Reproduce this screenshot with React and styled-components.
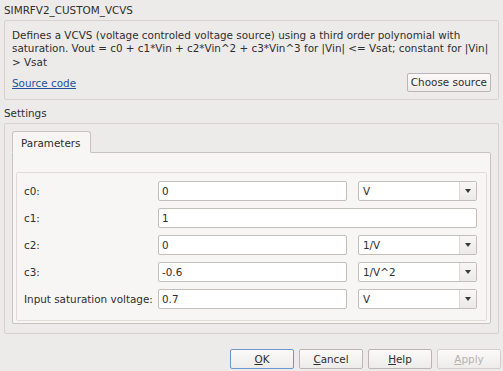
import React from "react";
import styled, { createGlobalStyle } from "styled-components";

const GlobalStyle = createGlobalStyle`
  html, body {
    margin: 0;
    padding: 0;
    background: #edebe9;
  }
  body {
    font-family: "DejaVu Sans", "Liberation Sans", sans-serif;
    font-size: 10.4px;
    color: #2e2e2e;
  }
`;

const Dialog = styled.div`
  width: 503px;
  height: 371px;
  display: flex;
  flex-direction: column;
  box-sizing: border-box;
  overflow: hidden;
`;

const Heading = styled.div`
  height: 20px;
  padding: 4px 0 0 4px;
  box-sizing: border-box;
  line-height: 13px;
`;

const DescBox = styled.div`
  margin: 0 4px;
  height: 80px;
  box-sizing: border-box;
  border: 1px solid #d6d3cf;
  border-radius: 2px;
  padding: 8px 7px 7px 7px;
  display: flex;
  flex-direction: column;
`;

const DescText = styled.div`
  line-height: 13.3px;
  height: 40px;
`;

const LinkRow = styled.div`
  display: flex;
  align-items: center;
  justify-content: space-between;
  margin-top: 4px;
`;

const SourceLink = styled.a`
  color: #22509f;
  text-decoration: underline;
  cursor: pointer;
`;

const PushButton = styled.button`
  font-family: inherit;
  font-size: inherit;
  color: ${(p) => (p.disabled ? "#b4b1ad" : "#2e2e2e")};
  background: linear-gradient(#fbfaf9, #eeecea);
  border: 1px solid ${(p) => (p.$default ? "#6b98cf" : p.disabled ? "#d3d0cc" : "#bab6b1")};
  border-radius: 2px;
  height: ${(p) => p.$h || 20}px;
  width: ${(p) => (p.$w ? p.$w + "px" : "auto")};
  padding: 0 3px;
  box-sizing: border-box;
  line-height: 1;
`;

const SectionLabel = styled.div`
  height: 23px;
  padding: 7px 0 0 4px;
  box-sizing: border-box;
  line-height: 13px;
`;

const GroupBox = styled.div`
  margin: 0 4px;
  height: 211px;
  box-sizing: border-box;
  border: 1px solid #d6d3cf;
  border-radius: 2px;
  padding: 7px 7px 9px 7px;
  display: flex;
  flex-direction: column;
`;

const TabBar = styled.div`
  display: flex;
  position: relative;
  z-index: 1;
  margin-bottom: -1px;
`;

const Tab = styled.div`
  width: 79px;
  height: 22px;
  box-sizing: border-box;
  background: #f8f6f4;
  border: 1px solid #c7c3be;
  border-bottom-color: #f8f6f4;
  border-radius: 3px 3px 0 0;
  padding: 5px 0 0 8px;
  line-height: 13px;
`;

const TabPanel = styled.div`
  flex: 1;
  background: #f8f6f4;
  border: 1px solid #c7c3be;
  border-radius: 0 2px 2px 2px;
  padding: 19px 3px 2px 3px;
  display: flex;
  flex-direction: column;
`;

const Frame = styled.div`
  flex: 1;
  border: 1px solid #e0ddd9;
  border-radius: 2px;
  padding: 8px 9px 8px 7px;
  display: grid;
  grid-template-columns: 123px 189px 119px;
  column-gap: 11px;
  row-gap: 7px;
  align-content: start;
  align-items: center;
`;

const FieldLabel = styled.div`
  line-height: 13px;
  white-space: nowrap;
`;

const TextField = styled.div`
  grid-column: ${(p) => (p.$wide ? "2 / span 2" : "auto")};
  height: 20px;
  box-sizing: border-box;
  background: #ffffff;
  border: 1px solid #c2beb9;
  border-radius: 2px;
  padding: 0 3px;
  display: flex;
  align-items: center;
  line-height: 13px;
`;

const Combo = styled.div`
  height: 20px;
  box-sizing: border-box;
  background: #ffffff;
  border: 1px solid #c2beb9;
  border-radius: 2px;
  display: flex;
  align-items: stretch;
`;

const ComboText = styled.div`
  flex: 1;
  padding-left: 4px;
  display: flex;
  align-items: center;
  line-height: 13px;
`;

const ComboArrow = styled.div`
  width: 16px;
  border-left: 1px solid #dcd9d5;
  background: linear-gradient(#f8f7f6, #eceae8);
  display: flex;
  align-items: center;
  justify-content: center;
  &::after {
    content: "";
    border-left: 3.5px solid transparent;
    border-right: 3.5px solid transparent;
    border-top: 4px solid #3a3a3a;
  }
`;

const ButtonRow = styled.div`
  margin-top: auto;
  display: flex;
  justify-content: flex-end;
  gap: 5px;
  padding: 0 2px 2px 0;
`;

const Mn = styled.span`
  text-decoration: underline;
`;

const rows = [
  { label: "c0:", value: "0", unit: "V" },
  { label: "c1:", value: "1" },
  { label: "c2:", value: "0", unit: "1/V" },
  { label: "c3:", value: "-0.6", unit: "1/V^2" },
  { label: "Input saturation voltage:", value: "0.7", unit: "V" },
];

export default function App() {
  return (
    <>
      <GlobalStyle />
      <Dialog>
        <Heading>SIMRFV2_CUSTOM_VCVS</Heading>
        <DescBox>
          <DescText>
            Defines a VCVS (voltage controled voltage source) using a third order polynomial with
            saturation. Vout = c0 + c1*Vin + c2*Vin^2 + c3*Vin^3 for |Vin| &lt;= Vsat; constant for |Vin|
            &gt; Vsat
          </DescText>
          <LinkRow>
            <SourceLink>Source code</SourceLink>
            <PushButton $h={19}>Choose source</PushButton>
          </LinkRow>
        </DescBox>
        <SectionLabel>Settings</SectionLabel>
        <GroupBox>
          <TabBar>
            <Tab>Parameters</Tab>
          </TabBar>
          <TabPanel>
            <Frame>
              {rows.map((r) => (
                <React.Fragment key={r.label}>
                  <FieldLabel>{r.label}</FieldLabel>
                  <TextField $wide={!r.unit}>{r.value}</TextField>
                  {r.unit && (
                    <Combo>
                      <ComboText>{r.unit}</ComboText>
                      <ComboArrow />
                    </Combo>
                  )}
                </React.Fragment>
              ))}
            </Frame>
          </TabPanel>
        </GroupBox>
        <ButtonRow>
          <PushButton $default $w={64}>
            <Mn>O</Mn>K
          </PushButton>
          <PushButton $w={64}>
            <Mn>C</Mn>ancel
          </PushButton>
          <PushButton $w={64}>
            <Mn>H</Mn>elp
          </PushButton>
          <PushButton $w={64} disabled>
            <Mn>A</Mn>pply
          </PushButton>
        </ButtonRow>
      </Dialog>
    </>
  );
}
